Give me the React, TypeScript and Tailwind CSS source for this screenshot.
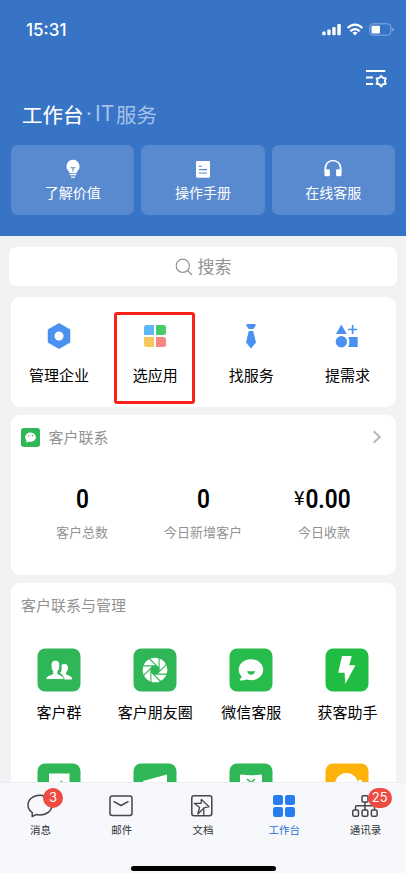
import type { ReactNode } from "react";

const S = ({ w, h, children, className = "" }: { w: number; h: number; children: ReactNode; className?: string }) => (
  <svg width={w} height={h} viewBox={`0 0 ${w} ${h}`} fill="none" className={`block shrink-0 ${className}`}>
    {children}
  </svg>
);

function StatusBar() {
  return (
    <div className="flex h-[60px] items-start justify-between pt-[18px] pr-[11px] pl-[26px]">
      <span className="font-['Inter','Liberation_Sans',sans-serif] text-[17px] leading-[24px] font-medium">15:31</span>
      <div className="flex pt-[5px]">
        <S w={20} h={13}>
          <g fill="white">
            <rect x="0.3" y="8.5" width="3.3" height="3.8" rx="1" />
            <rect x="5.3" y="6.5" width="3.3" height="5.8" rx="1" />
            <rect x="10.3" y="4" width="3.3" height="8.3" rx="1" />
            <rect x="15.3" y="1" width="3.5" height="11.3" rx="1" />
          </g>
        </S>
        <S w={16} h={13} className="ml-[5px]">
          <g stroke="white" strokeWidth="2.3">
            <path d="M0.7 5.1C4.9 0.4 11.1 0.4 15.3 5.1" />
            <path d="M3.3 8.2C6.1 5.3 9.9 5.3 12.7 8.2" />
          </g>
          <path d="M5.4 9.8Q8 7.8 10.6 9.8L8 12.4Z" fill="white" />
        </S>
        <S w={26} h={13} className="ml-[6px]">
          <rect x="0.8" y="0.8" width="21" height="11.4" rx="3" stroke="#89ace0" />
          <rect x="2.5" y="2.7" width="8.5" height="7.8" rx="1" fill="white" />
          <path d="M23.3 4.7V8.5Q25 8 25 6.6T23.3 4.7Z" fill="#89ace0" />
        </S>
      </div>
    </div>
  );
}

const tiles = [
  {
    label: "了解价值",
    icon: (
      <S w={20} h={20}>
        <path d="M10 0.7A6.6 6.6 0 0 0 5.7 12.2L6.7 14.2H13.3L14.3 12.2A6.6 6.6 0 0 0 10 0.7Z" fill="white" />
        <path d="M7.5 8.8H12.5M10 8.8V12.6" stroke="#5989ce" strokeWidth="1.1" />
        <path d="M6.7 15.7H13.3M8 18.2H12" stroke="white" strokeWidth="1.3" />
      </S>
    ),
  },
  {
    label: "操作手册",
    icon: (
      <S w={20} h={20}>
        <rect x="3" y="2" width="14" height="16.8" rx="1.2" fill="white" />
        <path d="M5.8 7.2H9M5.8 10.6H14M5.8 14H14" stroke="#5989ce" strokeWidth="1.1" />
      </S>
    ),
  },
  {
    label: "在线客服",
    icon: (
      <S w={20} h={20}>
        <path d="M2.3 13V9.2A7.7 7.7 0 0 1 17.7 9.2V13" stroke="white" strokeWidth="1.7" />
        <rect x="1.5" y="10.2" width="5.4" height="7" rx="1.2" fill="white" />
        <rect x="13.1" y="10.2" width="5.4" height="7" rx="1.2" fill="white" />
      </S>
    ),
  },
];

const quick = [
  {
    label: "管理企业",
    icon: (
      <S w={26} h={28}>
        <path d="M13 2L23.5 8V20L13 26L2.5 20V8Z" fill="#4b91ef" stroke="#4b91ef" strokeWidth="1.5" strokeLinejoin="round" />
        <circle cx="13" cy="14" r="4.5" fill="white" />
      </S>
    ),
  },
  {
    label: "选应用",
    icon: (
      <S w={26} h={28}>
        <path d="M4.5 3H12V13H2V5.5Q2 3 4.5 3Z" fill="#5cb8f8" />
        <path d="M14 3H21.5Q24 3 24 5.5V10.5Q24 13 21.5 13H14Z" fill="#46cd69" />
        <path d="M2 15H12V25H4.5Q2 25 2 22.5Z" fill="#f4c95c" />
        <path d="M14 15H21.5Q24 15 24 17.5V22.5Q24 25 21.5 25H14Z" fill="#f8857f" />
      </S>
    ),
  },
  {
    label: "找服务",
    icon: (
      <S w={26} h={28}>
        <path d="M8.5 2H17.5V4L15.3 7H10.7L8.5 4ZM10.8 9H15.2L18 20.5L13 26.5L8 20.5Z" fill="#4b91ef" />
      </S>
    ),
  },
  {
    label: "提需求",
    icon: (
      <S w={26} h={28}>
        <path d="M7.3 2.5L12.7 12H2Z" fill="#4b91ef" />
        <path d="M14 7.5H23.2M18.6 3V12" stroke="#4b91ef" strokeWidth="1.7" />
        <circle cx="7.4" cy="19.7" r="5.7" fill="#4b91ef" />
        <path d="M14.2 15H23.7V25H14.2Q16.5 20 14.2 15Z" fill="#4b91ef" />
      </S>
    ),
  },
];

const stats = [
  { value: "0", label: "客户总数" },
  { value: "0", label: "今日新增客户" },
  { value: "0.00", yen: true, label: "今日收款" },
];

const apps = [
  {
    label: "客户群",
    color: "#2fb656",
    icon: (
      <g fill="white">
        <path d="M23.5 31.5H35.3Q35.3 29 32.4 27.8L29.2 26.5V24.3Q31.3 22.5 31 19.2Q30.6 16 27.3 16Q25.3 16 24.3 17.4Q25.5 22.5 23 25.3Q27 27 26.5 31.5Z" />
        <path d="M8.7 31.5Q8.7 28.7 11.2 27.8L15.8 25.8V23.5Q13.7 21.3 14 17Q14.3 12.2 18.4 12.2T22.8 17Q23 21.3 20.9 23.5V25.8L24.9 27.8Q27.2 28.8 27.2 31.5Z" stroke="#2fb656" strokeWidth="0.9" />
      </g>
    ),
  },
  {
    label: "客户朋友圈",
    color: "#2fb656",
    icon: (
      <g>
        <circle cx="22" cy="22" r="12.3" fill="white" />
        <path d="M20.3 17.9H23.7L26.1 20.3V23.7L23.7 26.1H20.3L17.9 23.7V20.3Z" fill="#2fb656" />
        {[0, 45, 90, 135, 180, 225, 270, 315].map((a) => (
          <path key={a} d="M23.7 17.9H9.5" stroke="#2fb656" strokeWidth="1.1" transform={`rotate(${a} 22 22)`} />
        ))}
      </g>
    ),
  },
  {
    label: "微信客服",
    color: "#28bc4c",
    icon: (
      <g>
        <path d="M22 11.2C15 11.2 9.7 15.7 9.7 21.6C9.7 24.7 11.2 27.2 12.8 28.8L10.5 32.2Q15 32.8 17.8 31.6Q19.8 32.2 22 32.2C29 32.2 34.2 27.6 34.2 21.7S29 11.2 22 11.2Z" fill="white" />
        <path d="M18 23.3H26.2Q25 26.8 22.1 26.8T18 23.3Z" fill="#28bc4c" />
      </g>
    ),
  },
  {
    label: "获客助手",
    color: "#20bd43",
    icon: <path d="M17 8H26.8L24.2 17.3H30.5L20.3 36L19.6 24.8H13.2Z" fill="white" />,
  },
];

const partial = [
  { color: "#2fb656", icon: <path d="M12 10.5H32.5V30H12ZM24.5 17.5L22 20H27Z" fill="white" fillRule="evenodd" /> },
  { color: "#2fb656", icon: <path d="M10 18L34 11.5V30H10Z" fill="white" /> },
  {
    color: "#2fb656",
    icon: (
      <g>
        <path d="M11 13Q11 11.5 12.5 11.6Q22 13 31.5 11.6Q33 11.5 33 13V30H11Z" fill="white" />
        <path d="M18 16L22 19.5L26 16" stroke="#2fb656" strokeWidth="1.5" />
      </g>
    ),
  },
  {
    color: "#fdb10b",
    icon: (
      <g fill="white">
        <circle cx="21.5" cy="21.5" r="11.5" />
        <circle cx="35" cy="18.5" r="2" />
      </g>
    ),
  },
];

const tabs = [
  {
    label: "消息",
    badge: "3",
    icon: (
      <path d="M14 3.2C7.2 3.2 2 7.4 2 13.1C2 16.6 3.7 19 6.3 20.6L6.2 24.5L10 22.6Q12 23.1 14 23C20.8 23 26 18.8 26 13.1S20.8 3.2 14 3.2Z" />
    ),
  },
  {
    label: "邮件",
    icon: (
      <g>
        <rect x="3" y="4" width="22" height="19.5" rx="2.2" />
        <path d="M6.5 9.3L14 13.5L21.5 9.3" />
      </g>
    ),
  },
  {
    label: "文档",
    icon: (
      <g>
        <rect x="3.8" y="3.7" width="20" height="20" rx="2.2" />
        <path d="M13.2 7.3V11.3H6.2L11.6 15.5L9.8 22L15.8 16.2M13.2 7.3L21 14.7L15.8 15.8V23.5" strokeWidth="1.3" />
      </g>
    ),
  },
  {
    label: "工作台",
    active: true,
    icon: (
      <g fill="#267df0" stroke="none">
        <rect x="3" y="3" width="10" height="10" rx="2.2" />
        <rect x="15" y="3" width="10" height="10" rx="2.2" />
        <rect x="3" y="15" width="10" height="10" rx="2.2" />
        <rect x="15" y="15" width="10" height="10" rx="2.2" />
      </g>
    ),
  },
  {
    label: "通讯录",
    badge: "25",
    icon: (
      <g>
        <rect x="11" y="3.8" width="6" height="6.2" rx="1" />
        <path d="M14 10V18M4.5 18V15.5Q4.5 13.8 6 13.8H22Q23.5 13.8 23.5 15.5V18" />
        <rect x="1.8" y="18" width="5.7" height="6.2" rx="1.3" />
        <rect x="11.1" y="18" width="5.7" height="6.2" rx="1.3" />
        <rect x="20.4" y="18" width="5.7" height="6.2" rx="1.3" />
      </g>
    ),
  },
];

function AppTile({ color, children }: { color: string; children: ReactNode }) {
  return (
    <S w={44} h={44}>
      <rect x="0.5" y="0.5" width="43" height="43" rx="7.5" fill={color} />
      {children}
    </S>
  );
}

export default function App() {
  return (
    <div className="flex h-[873px] w-[406px] flex-col overflow-hidden bg-[#f1f2f4] font-['Noto_Sans_CJK_SC',sans-serif] text-black">
      <header className="h-[236px] shrink-0 bg-[#3874c6] text-white">
        <StatusBar />
        <div className="flex h-[39px] justify-end pt-[8px] pr-[18px]">
          <S w={24} h={22}>
            <path d="M2 3H21.3M2 9.5H9M2 16H9" stroke="white" strokeWidth="2" />
            <path d="M17.2 7.8L19 10L21.8 10.4L20.8 13.1L21.8 15.8L19 16.2L17.2 18.4L15.4 16.2L12.6 15.8L13.6 13.1L12.6 10.4L15.4 10Z" stroke="white" strokeWidth="1.9" strokeLinejoin="round" />
          </S>
        </div>
        <h1 className="flex h-[46px] pl-[22px] text-[20.5px] leading-[30px] font-normal">
          <span className="w-[62px] [-webkit-text-stroke:0.15px_white]">工作台</span>
          <span className="ml-[2px] w-[9px] font-['Inter',sans-serif] text-[#a6c2e9]">·</span>
          <span className="flex text-[#a6c2e9]">
            <span className="w-[21px] font-['Inter',sans-serif] text-[21px]">IT</span>
            <span>服务</span>
          </span>
        </h1>
        <div className="grid grid-cols-3 gap-[7px] px-[11px]">
          {tiles.map((t) => (
            <div key={t.label} className="flex h-[70px] flex-col items-center rounded-[7px] bg-[#5989ce] pt-[14px]">
              {t.icon}
              <span className="mt-[3px] text-[14px] leading-[20px]">{t.label}</span>
            </div>
          ))}
        </div>
      </header>

      <div className="mx-[9px] mt-[11px] flex h-[39px] w-[388px] shrink-0 items-center justify-center rounded-[7px] bg-white text-[17px] text-[#929292]">
        <S w={18} h={18} className="mr-[5px]">
          <circle cx="7.8" cy="7.8" r="6.6" stroke="#929292" strokeWidth="1.2" />
          <path d="M12.5 12.5L17 17" stroke="#929292" strokeWidth="1.2" />
        </S>
        <span className="pb-[1px] leading-[24px]">搜索</span>
      </div>

      <section className="mx-[11px] mt-[11px] flex h-[110px] w-[385px] shrink-0 rounded-[9px] bg-white pr-[0.5px]">
        {quick.map((q, i) => (
          <div key={q.label} className="relative flex flex-1 flex-col items-center pt-[25px]">
            {i === 1 && <div className="absolute top-[15px] left-[7px] h-[92px] w-[81px] rounded-[3px] border-[3px] border-[#fb2018]" />}
            {q.icon}
            <span className="mt-[14px] text-[15px] leading-[22px]">{q.label}</span>
          </div>
        ))}
      </section>

      <section className="mx-[11px] mt-[8px] h-[160px] w-[385px] shrink-0 rounded-[9px] bg-white">
        <div className="flex h-[44px] items-center pr-[14px] pl-[10px]">
          <S w={19} h={19}>
            <rect width="19" height="19" rx="3" fill="#2fb656" />
            <ellipse cx="9.5" cy="9.2" rx="5.4" ry="4.6" fill="white" />
            <path d="M5.5 12L5.3 14.8L8.5 13.3Z" fill="white" />
            <circle cx="7.6" cy="7.8" r="0.8" fill="#2fb656" />
            <circle cx="11.5" cy="7.8" r="0.8" fill="#2fb656" />
          </S>
          <span className="ml-[8.5px] flex-1 pt-[1px] text-[15px] text-[#929292]">客户联系</span>
          <S w={10} h={14}>
            <path d="M1.7 1.2L7.8 7L1.7 12.8" stroke="#b8b8b8" strokeWidth="2" />
          </S>
        </div>
        <div className="grid grid-cols-3 pt-[24px] pr-[11.5px] pl-[10.5px]">
          {stats.map((s) => (
            <div key={s.label} className="flex flex-col items-center">
              <div className="flex h-[32px] text-[26px] leading-[32px]">
                {s.yen && <span className="-mr-[5px] w-[13px] text-[19px] leading-[27px] [-webkit-text-stroke:0.2px_black]">¥</span>}
                <span className="origin-center scale-x-[0.87] font-['Roboto',sans-serif] font-semibold">{s.value}</span>
              </div>
              <span className="mt-[7px] text-[13px] leading-[20px] text-[#929292]">{s.label}</span>
            </div>
          ))}
        </div>
      </section>

      <section className="mx-[11px] mt-[8px] h-[199px] w-[385px] shrink-0 overflow-hidden rounded-t-[9px] bg-white">
        <h2 className="h-[65px] pt-[11px] pl-[10px] text-[15px] leading-[22px] text-[#929292]">客户联系与管理</h2>
        <div className="grid grid-cols-4 pr-[0.5px]">
          {apps.map((a) => (
            <div key={a.label} className="flex h-[115px] flex-col items-center">
              <AppTile color={a.color}>{a.icon}</AppTile>
              <span className="mt-[9px] text-[15px] leading-[22px]">{a.label}</span>
            </div>
          ))}
          {partial.map((a, i) => (
            <div key={i} className="flex flex-col items-center">
              <AppTile color={a.color}>{a.icon}</AppTile>
            </div>
          ))}
        </div>
      </section>

      <nav className="flex h-[91px] shrink-0 flex-col border-t border-[#eeeff2] bg-[#f7f8fb]">
        <div className="grid h-[83px] grid-cols-5">
          {tabs.map((t) => (
            <div key={t.label} className="relative flex flex-col items-center pt-[9px]">
              <S w={28} h={28} className="-ml-[1px]">
                <g stroke="#45464a" strokeWidth="1.5" strokeLinejoin="round">{t.icon}</g>
              </S>
              <span className={`mt-[2px] text-[10.5px] leading-[16px] ${t.active ? "text-[#2671d3]" : "text-[#303134]"}`}>{t.label}</span>
              {t.badge && (
                <span className="absolute top-[5px] left-[43px] flex h-[20px] min-w-[20px] items-center justify-center rounded-full bg-[#ee4b42] px-[4px] font-['Inter',sans-serif] text-[13px] text-white">
                  {t.badge}
                </span>
              )}
            </div>
          ))}
        </div>
        <div className="ml-[131px] h-[5px] w-[145px] rounded-full bg-black" />
      </nav>
    </div>
  );
}
